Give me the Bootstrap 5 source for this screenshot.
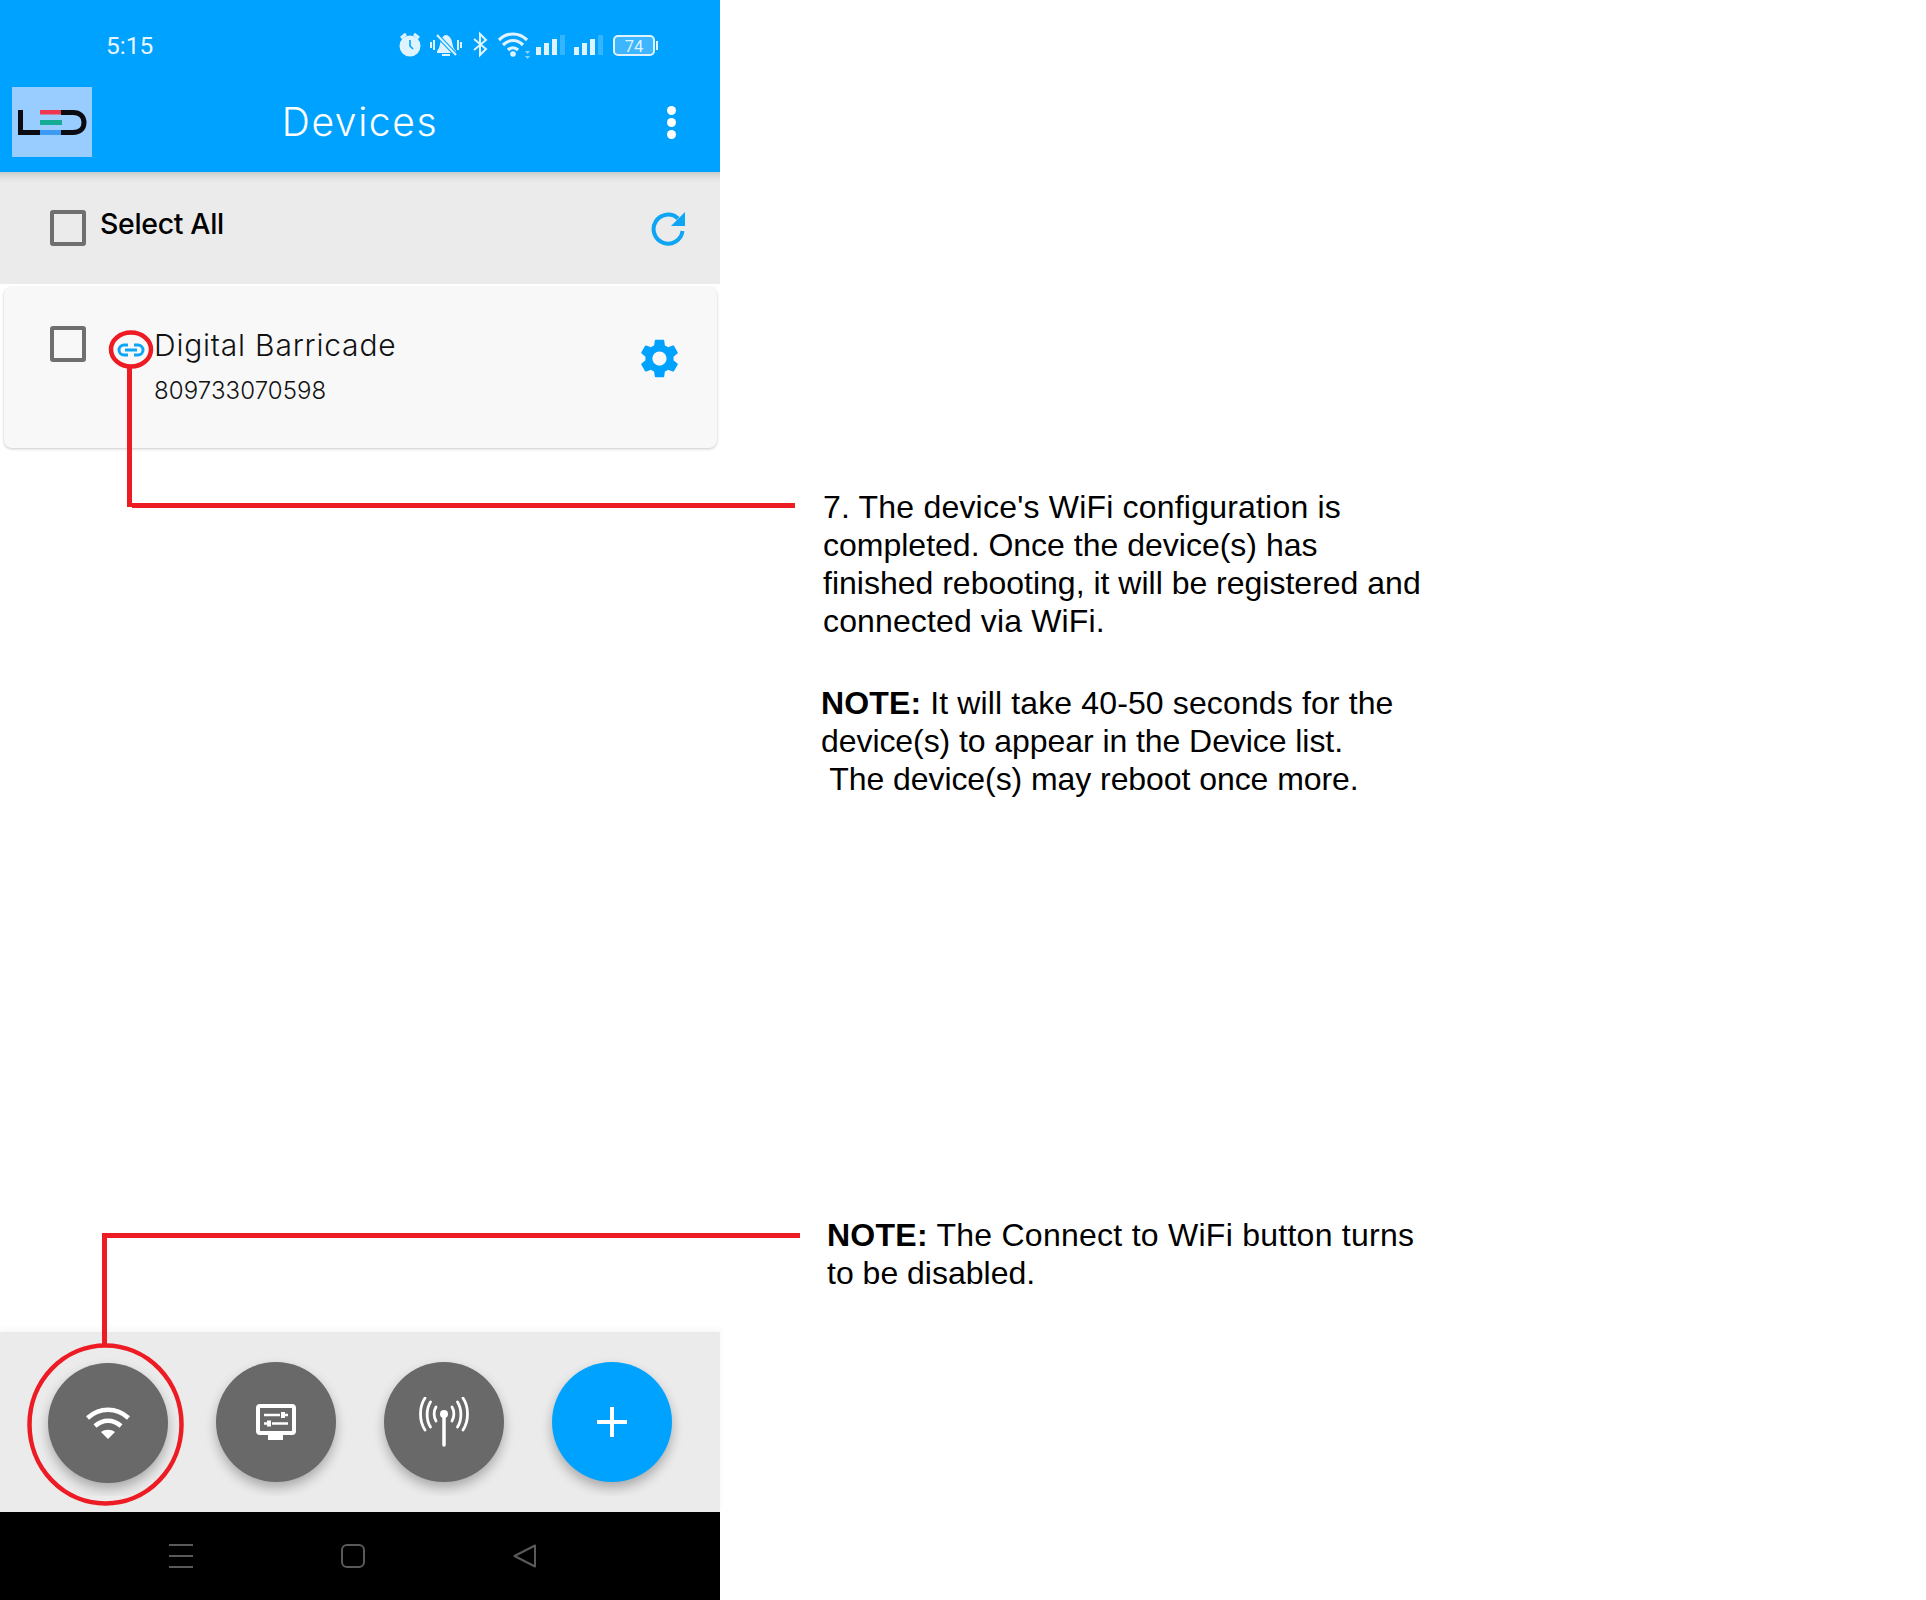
<!DOCTYPE html>
<html lang="en">
<head>
  <meta charset="UTF-8" />
  <title>Devices</title>
  <link href="https://cdn.jsdelivr.net/npm/bootstrap@5.3.0/dist/css/bootstrap.min.css" rel="stylesheet">
  <style>
    body { background: #fff; width: 1926px; height: 1600px; overflow: hidden; position: relative; }
    .phone { width: 720px; height: 1600px; font-family: Inter, "Noto Sans", sans-serif; color: #111; }
    .app-head { background: #00a2ff; height: 172px; color: #fff; position: relative; z-index: 1; }
    .status-row { height: 87px; padding: 28px 0 0 106px; }
    .status-time { font: 400 24.5px/36px Roboto, sans-serif; color: #e8f6ff; }
    .status-icons { position: absolute; left: 395px; top: 28px; }
    .tool-row { height: 70px; padding: 0 0 0 12px; }
    .logo-box { width: 80px; height: 70px; background: #99ccff; }
    .app-title { width: 536px; text-align: center; font-size: 39px; font-weight: 300; letter-spacing: 1.6px; line-height: 70px; }
    .kebab { margin-left: 39px; }
    .kebab i { display: block; width: 9px; height: 9px; border-radius: 50%; background: #fff; margin: 3px 0; }
    .select-bar { height: 112px; background: #ebebeb; padding: 37px 33px 0 50px; box-shadow: inset 0 12px 10px -10px rgba(0,0,0,.2); }
    .box-mark { width: 36px; height: 36px; border: 4px solid #6f6f6f; border-radius: 3px; flex: none; background: transparent; }
    .select-bar .box-mark { margin-top: 1px; }
    .select-label { font-size: 28.5px; font-weight: 500; letter-spacing: -.35px; margin: -3px 0 0 14px; line-height: 36px; color: #000; }
    .device-card { margin: 3px 3px 0 4px; height: 161px; background: #f8f8f8; border: 0; border-radius: 8px; box-shadow: 0 1px 3px rgba(0,0,0,.22); padding: 39px 0 0 46px; }
    .device-name { font-size: 30px; font-weight: 300; line-height: 38px; letter-spacing: .8px; }
    .device-id { font-size: 24px; font-weight: 300; line-height: 30px; margin-top: 12px; letter-spacing: .1px; }
    .device-text { margin-left: 68px; }
    .gear-slot { margin: 9px 34px 0 auto; }
    .fab-bar { background: #ebebeb; height: 180px; box-shadow: 0 -3px 6px rgba(0,0,0,.04); }
    .fab-clip { height: 164px; overflow: hidden; padding: 30px 0 0 48px; gap: 48px; }
    .fab-btn { width: 120px; height: 120px; border-radius: 50%; background: #696969; border: 0; padding: 0; box-shadow: 0 6px 12px rgba(0,0,0,.28); flex: none; }
    .fab-btn.fab-low { margin-top: 1px; }
    .fab-btn.fab-add { background: #00a2ff; }
    .sys-nav { background: #000; height: 88px; padding-top: 32px; gap: 148px; padding-left: 169px; }
    .notes { width: 700px; padding-left: 101px; font: 400 32px/38px "Liberation Sans", Arial, sans-serif; color: #000; }
    .note-line { white-space: pre; }
    .note-first { margin: 488px 0 0 2px; }
    .note-second { margin-top: 44px; }
    .note-third { margin: 418px 0 0 6px; }
    .trk-a { letter-spacing: .2px; }
    .trk-b { letter-spacing: .13px; }
    .trk-c { letter-spacing: -.07px; }
    .trk-d { letter-spacing: .26px; }
    .callouts { position: absolute; left: 0; top: 0; pointer-events: none; z-index: 2; }
  </style>
</head>
<body>

<div class="d-flex">
  <div class="phone d-flex flex-column">
    <header class="app-head">
      <div class="status-row"><span class="status-time">5:15</span></div>
      <svg class="status-icons" width="270" height="32" viewBox="395 28 270 32" fill="#dff3ff">
        <circle cx="410" cy="46" r="10.5"/>
        <path d="M401 38l5-4M419 38l-5-4" stroke="#dff3ff" stroke-width="3" fill="none"/>
        <path d="M410 40v6l3 3" stroke="#00a2ff" stroke-width="1.6" fill="none"/>
        <path d="M437 51c3-3 3-8 4-11 1-3 3-5 5-5s4 2 5 4c2 4 1 9 5 12v2h-19zM442 54h8v2h-8z"/>
        <path d="M437 35l19 20" stroke="#00a2ff" stroke-width="4"/>
        <path d="M437 35l19 20" stroke="#dff3ff" stroke-width="2"/>
        <path d="M431 42v6M434 40v10M458 40v10M461 42v6" stroke="#dff3ff" stroke-width="2"/>
        <path d="M474 39l12 10-6 6V34l6 6-12 10" stroke="#dff3ff" stroke-width="2" fill="none"/>
        <path d="M499 40c8-8 20-8 28 0M503 45c6-6 14-6 20 0M508 50c3-3 7-3 10 0" stroke="#dff3ff" stroke-width="3.200" fill="none"/>
        <circle cx="513" cy="54" r="2.800"/>
        <path d="M525 51h5l-2.500 3zM525 56h5l-2.500 3z" fill="#8fd2ff"/>
        <path d="M536 47h5v8h-5zM544 43h5v12h-5zM552 39h5v16h-5z"/>
        <path d="M560 35h5v20h-5z" fill="#33b5ff"/>
        <path d="M574 47h5v8h-5zM582 43h5v12h-5zM590 39h5v16h-5z"/>
        <path d="M598 35h5v20h-5z" fill="#33b5ff"/>
        <rect x="614" y="36" width="40" height="19" rx="4" fill="#3db6ff" stroke="#dff3ff" stroke-width="2"/>
        <rect x="656" y="41" width="2" height="9" fill="#dff3ff"/>
        <text x="634" y="51.500" text-anchor="middle" font-family="Roboto, sans-serif" font-size="16.500">74</text>
      </svg>
      <div class="tool-row d-flex align-items-center">
        <div class="logo-box flex-shrink-0">
          <svg width="80" height="70" viewBox="0 0 80 70">
            <path d="M6 23h5v20h18v5H6z" fill="#0b0b14"/>
            <rect x="28" y="43" width="21" height="5" fill="#3b9bf5"/>
            <rect x="28" y="23" width="21" height="4.500" fill="#f0364f"/>
            <rect x="28" y="33" width="22" height="5" fill="#14ad94"/>
            <path d="M49 25.500h12c7 0 11 4 11 10s-4 10-11 10H49" fill="none" stroke="#0b0b14" stroke-width="5"/>
          </svg>
        </div>
        <div class="app-title">Devices</div>
        <div class="kebab"><i></i><i></i><i></i></div>
      </div>
    </header>

    <div class="select-bar d-flex align-items-start">
      <div class="box-mark"></div>
      <div class="select-label">Select All</div>
      <svg class="ms-auto" width="38" height="38" viewBox="0 0 38 38">
        <path d="M29 9.500A14.500 14.500 0 1 0 33.500 22" fill="none" stroke="#0ea5f5" stroke-width="4"/>
        <path d="M36 3v14H22z" fill="#0ea5f5"/>
      </svg>
    </div>

    <div class="card device-card flex-row align-items-start">
      <div class="box-mark"></div>
      <div class="device-text">
        <div class="device-name">Digital Barricade</div>
        <div class="device-id">809733070598</div>
      </div>
      <svg class="gear-slot" width="47" height="47" viewBox="0 0 24 24" fill="#00a2ff">
        <path d="M19.14 12.940c.04-.3.06-.61.06-.94 0-.32-.02-.64-.07-.94l2.030-1.580c.18-.14.23-.41.12-.61l-1.920-3.320c-.12-.22-.37-.29-.59-.22l-2.390.96c-.5-.38-1.030-.7-1.620-.94l-.36-2.540c-.04-.24-.24-.41-.48-.41h-3.840c-.24 0-.43.17-.47.41l-.36 2.540c-.59.24-1.130.57-1.620.94l-2.390-.96c-.22-.08-.47 0-.59.22L2.740 8.870c-.12.21-.08.47.12.61l2.030 1.580c-.05.3-.09.63-.09.94s.02.64.07.94l-2.030 1.580c-.18.14-.23.41-.12.61l1.920 3.320c.12.22.37.29.59.22l2.390-.96c.5.38 1.030.7 1.620.94l.36 2.540c.05.24.24.41.48.41h3.840c.24 0 .44-.17.47-.41l.36-2.540c.59-.24 1.130-.56 1.620-.94l2.390.96c.22.08.47 0 .59-.22l1.920-3.320c.12-.22.07-.47-.12-.61l-2.010-1.580zM12 15.600c-1.980 0-3.600-1.620-3.600-3.600s1.620-3.600 3.600-3.600 3.600 1.620 3.600 3.600-1.620 3.600-3.600 3.600z"/>
      </svg>
    </div>

    <div class="flex-grow-1"></div>

    <div class="fab-bar">
      <div class="fab-clip d-flex align-items-start">
        <button class="fab-btn fab-low d-flex align-items-center justify-content-center">
          <svg width="46" height="34" viewBox="0 0 46 34" fill="none" stroke="#fff" stroke-width="4.500">
            <path d="M2.500 12c12-11 29-11 41 0M10 20c8-7 18-7 26 0"/>
            <path d="M23 33l-7-7c4-3 10-3 14 0z" fill="#fff" stroke="none"/>
          </svg>
        </button>
        <button class="fab-btn d-flex align-items-center justify-content-center">
          <svg width="40" height="36" viewBox="0 0 40 36" fill="none" stroke="#fff">
            <rect x="2" y="2" width="36" height="27" rx="2" stroke-width="4"/>
            <path d="M12 31h15v5H12z" fill="#fff" stroke="none"/>
            <path d="M8 11h16M29 11h3M8 19.500h3M16 19.500h16" stroke-width="2.500"/>
            <path d="M27 8v6M13 16.500v6" stroke-width="4"/>
          </svg>
        </button>
        <button class="fab-btn d-flex align-items-center justify-content-center">
          <svg width="50" height="50" viewBox="0 0 50 50" fill="none" stroke="#fff" stroke-width="2.800" stroke-linecap="round">
            <path d="M25 17v31" stroke-width="3.500"/>
            <circle cx="25" cy="17" r="4" fill="#fff" stroke="none"/>
            <path d="M6 1C0 10 0 24 6 33M44 1c6 9 6 23 0 32"/>
            <path d="M11.500 5C7 12 7 23 11.500 30M38.500 5c4.500 7 4.500 18 0 25"/>
            <path d="M17 10c-2.500 4-2.500 10 0 14M33 10c2.500 4 2.500 10 0 14"/>
          </svg>
        </button>
        <button class="fab-btn fab-add d-flex align-items-center justify-content-center">
          <svg width="30" height="30" viewBox="0 0 30 30" stroke="#fff" stroke-width="4"><path d="M15 0v30M0 15h30"/></svg>
        </button>
      </div>
    </div>

    <div class="sys-nav d-flex align-items-start">
      <svg width="24" height="24" viewBox="0 0 24 24" stroke="#5a5a5a" stroke-width="2"><path d="M0 1h24M0 12h24M0 23h24"/></svg>
      <svg width="24" height="24" viewBox="0 0 24 24" fill="none" stroke="#5a5a5a" stroke-width="2"><rect x="1" y="1" width="22" height="22" rx="5"/></svg>
      <svg width="24" height="24" viewBox="0 0 24 24" fill="none" stroke="#5a5a5a" stroke-width="2" stroke-linejoin="round"><path d="M22 1.500v21L1.500 12z"/></svg>
    </div>
  </div>

  <div class="notes">
    <div class="note-first">
      <div class="note-line trk-a">7. The device's WiFi configuration is</div>
      <div class="note-line">completed. Once the device(s) has</div>
      <div class="note-line">finished rebooting, it will be registered and</div>
      <div class="note-line trk-b">connected via WiFi.</div>
    </div>
    <div class="note-second">
      <div class="note-line trk-b"><b>NOTE:</b> It will take 40-50 seconds for the</div>
      <div class="note-line trk-c">device(s) to appear in the Device list.</div>
      <div class="note-line trk-c"> The device(s) may reboot once more.</div>
    </div>
    <div class="note-third">
      <div class="note-line trk-d"><b>NOTE:</b> The Connect to WiFi button turns</div>
      <div class="note-line">to be disabled.</div>
    </div>
  </div>
</div>

<!-- red markup drawn over the screenshot -->
<svg class="callouts" width="1926" height="1600" viewBox="0 0 1926 1600" fill="none" stroke="#ed1c24" stroke-width="5">
  <ellipse cx="131" cy="349.500" rx="20" ry="17" stroke-width="4.500"/>
  <path d="M129.500 368v139M132 505.500h663"/>
  <g fill="none" stroke="#0ea5f5" stroke-width="3">
    <path d="M128 345h-4a5 5 0 0 0 0 10h4M134 345h4a5 5 0 0 1 0 10h-4M125 350h12"/>
  </g>
  <ellipse cx="105.500" cy="1424.500" rx="76" ry="79" stroke-width="4.500"/>
  <path d="M104.500 1345v-110M102 1235.500h698"/>
</svg>

<script src="https://cdn.jsdelivr.net/npm/bootstrap@5.3.0/dist/js/bootstrap.bundle.min.js"></script>
</body>
</html>
